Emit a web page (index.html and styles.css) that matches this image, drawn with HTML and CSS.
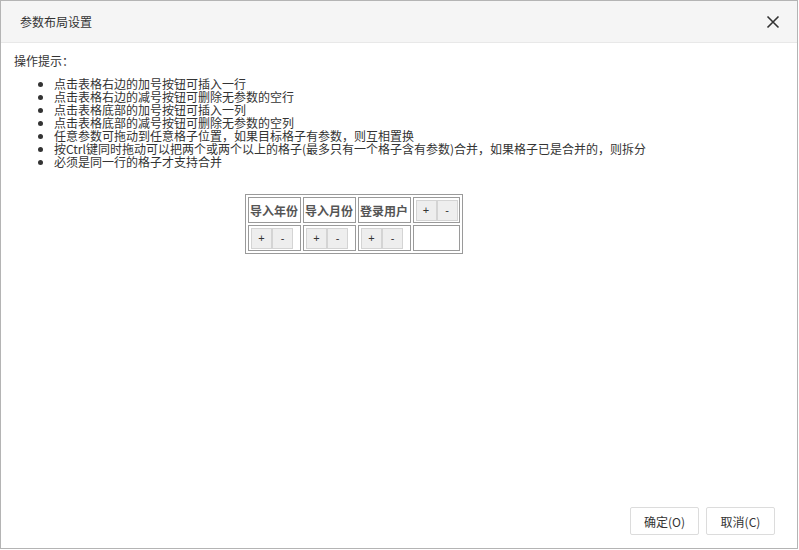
FILE: index.html
```html
<!DOCTYPE html>
<html lang="zh">
	<head>
		<meta charset="UTF-8" />
		<title>参数布局设置</title>
		<link rel="stylesheet" href="styles.css">
	</head>

	<body>
		<div class="dialog">
			<div class="dialog-head">
				<span class="title">参数布局设置</span>
				<svg class="close" width="14" height="14" viewBox="0 0 14 14">
					<path d="M1.5 1.5 L12.5 12.5 M12.5 1.5 L1.5 12.5" stroke="#333" stroke-width="1.6" fill="none" />
				</svg>
			</div>
			<div class="dialog-body">
				<div class="tip">操作提示：</div>
				<ul class="tip-list">
					<li>点击表格右边的加号按钮可插入一行</li>
					<li>点击表格右边的减号按钮可删除无参数的空行</li>
					<li>点击表格底部的加号按钮可插入一列</li>
					<li>点击表格底部的减号按钮可删除无参数的空列</li>
					<li>任意参数可拖动到任意格子位置，如果目标格子有参数，则互相置换</li>
					<li>按Ctrl键同时拖动可以把两个或两个以上的格子(最多只有一个格子含有参数)合并，如果格子已是合并的，则拆分</li>
					<li>必须是同一行的格子才支持合并</li>
				</ul>
				<table class="layout">
					<tr>
						<td class="cell">导入年份</td>
						<td class="cell">导入月份</td>
						<td class="cell">登录用户</td>
						<td class="cell ops"><button class="btn-sm">+</button><button class="btn-sm">-</button></td>
					</tr>
					<tr>
						<td class="cell ops"><button class="btn-sm">+</button><button class="btn-sm">-</button></td>
						<td class="cell ops"><button class="btn-sm">+</button><button class="btn-sm">-</button></td>
						<td class="cell ops"><button class="btn-sm">+</button><button class="btn-sm">-</button></td>
						<td class="cell"></td>
					</tr>
				</table>
			</div>
			<div class="dialog-foot">
				<button class="btn">确定(O)</button>
				<button class="btn">取消(C)</button>
			</div>
		</div>
	</body>
</html>
```

FILE: styles.css
```css
* {
	box-sizing: border-box;
	margin: 0;
	padding: 0;
}

body {
	font-family: "Noto Sans CJK SC", "Liberation Sans", sans-serif;
	font-size: 12px;
	color: #333;
	background: #fff;
}

.dialog {
	width: 798px;
	height: 549px;
	border: 1px solid #b4b4b4;
	display: flex;
	flex-direction: column;
}

.dialog-head {
	height: 42px;
	flex: none;
	background: #f5f5f5;
	border-bottom: 1px solid #e8e8e8;
	padding: 0 17px 0 19px;
	display: flex;
	align-items: center;
	justify-content: space-between;
}

.title {
	font-size: 12px;
	color: #333;
}

.dialog-body {
	flex: 1;
	padding: 11px 13px;
}

.tip {
	line-height: 13px;
}

.tip-list {
	margin-top: 10px;
	padding-left: 40px;
	line-height: 13px;
}

.layout {
	margin: 26px 0 0 231px;
	border: 1px solid #9a9a9a;
	border-spacing: 2px;
}

.cell {
	border: 1px solid #9a9a9a;
	width: 53px;
	height: 26px;
	padding: 0 1px;
	color: #555;
	font-weight: 600;
	white-space: nowrap;
}

.cell.ops {
	padding: 1px 5px 1px 2px;
}

tr:first-child .cell.ops {
	padding: 1px;
	text-align: center;
}

.cell:last-child {
	width: 47px;
}

.btn-sm {
	width: 21px;
	height: 21px;
	border: 1px solid #d4d4d4;
	background: #eee;
	font-size: 11px;
	color: #333;
	vertical-align: middle;
	font-family: "Liberation Sans", sans-serif;
}

.dialog-foot {
	flex: none;
	display: flex;
	justify-content: flex-end;
	gap: 7px;
	padding: 0 22px 13px 0;
}

.btn {
	width: 69px;
	height: 28px;
	border: 1px solid #dcdcdc;
	border-radius: 2px;
	background: #fff;
	color: #333;
	font-family: "Noto Sans CJK SC", "Liberation Sans", sans-serif;
	font-size: 12px;
}
```
